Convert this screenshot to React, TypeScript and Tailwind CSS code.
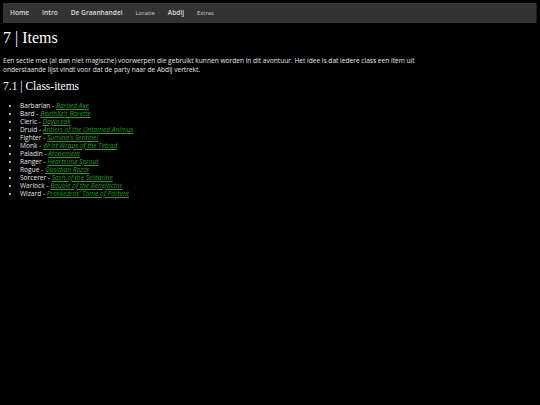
const navItems = [
  { label: 'Home', small: false },
  { label: 'Intro', small: false },
  { label: 'De Graanhandel', small: false },
  { label: 'Locatie', small: true },
  { label: 'Abdij', small: false },
  { label: 'Extras', small: true },
];

const classItems = [
  { cls: 'Barbarian', item: 'Barbed Axe' },
  { cls: 'Bard', item: "Baethliz's Barette" },
  { cls: 'Cleric', item: 'Daybreak' },
  { cls: 'Druid', item: 'Antlers of the Untamed Animus' },
  { cls: 'Fighter', item: "Sumina's Sentinel" },
  { cls: 'Monk', item: 'Wrist Wraps of the Tetrad' },
  { cls: 'Paladin', item: 'Atonement' },
  { cls: 'Ranger', item: 'Heartsong Sprout' },
  { cls: 'Rogue', item: 'Obsidian Razor' },
  { cls: 'Sorcerer', item: 'Sash of the Seldarine' },
  { cls: 'Warlock', item: 'Bauble of the Benefactor' },
  { cls: 'Wizard', item: "Proskedros' Tome of Portent" },
];

export default function App() {
  return (
    <div className="min-h-[405px] w-[540px] bg-black text-[#e6e6e6] font-['Open_Sans',sans-serif]">
      {/* Top navigation */}
      <div className="p-[3px]">
        <nav className="flex h-[20px] items-center gap-[13px] bg-[#333333] px-[7px] border-r border-[#1f1f1f]">
          {navItems.map((n) => (
            <a
              key={n.label}
              className={
                n.small
                  ? 'text-[5.8px] text-[#cfcfcf]'
                  : 'text-[6.6px] font-semibold text-[#dcdcdc]'
              }
            >
              {n.label}
            </a>
          ))}
        </nav>
      </div>

      <main className="px-[3px]">
        <h1 className="mt-[2px] text-[16px] leading-[20px] font-['Liberation_Serif',serif] text-white">
          7 | Items
        </h1>
        <p className="mt-[8px] max-w-[420px] text-[6.6px] leading-[9px]">
          Een sectie met (al dan niet magische) voorwerpen die gebruikt kunnen worden in dit avontuur. Het idee is dat iedere class een item uit onderstaande lijst vindt voor dat de party naar de Abdij vertrekt.
        </p>
        <h2 className="mt-[5px] text-[11.5px] leading-[14px] font-['Liberation_Serif',serif] text-white">
          7.1 | Class-items
        </h2>
        <ul className="mt-[9px] list-disc pl-[17px] text-[6.6px] leading-[8px]">
          {classItems.map((c) => (
            <li key={c.cls}>
              {c.cls} -{' '}
              <a className="italic underline text-[#2f9a2f]">{c.item}</a>
            </li>
          ))}
        </ul>
      </main>
    </div>
  );
}
